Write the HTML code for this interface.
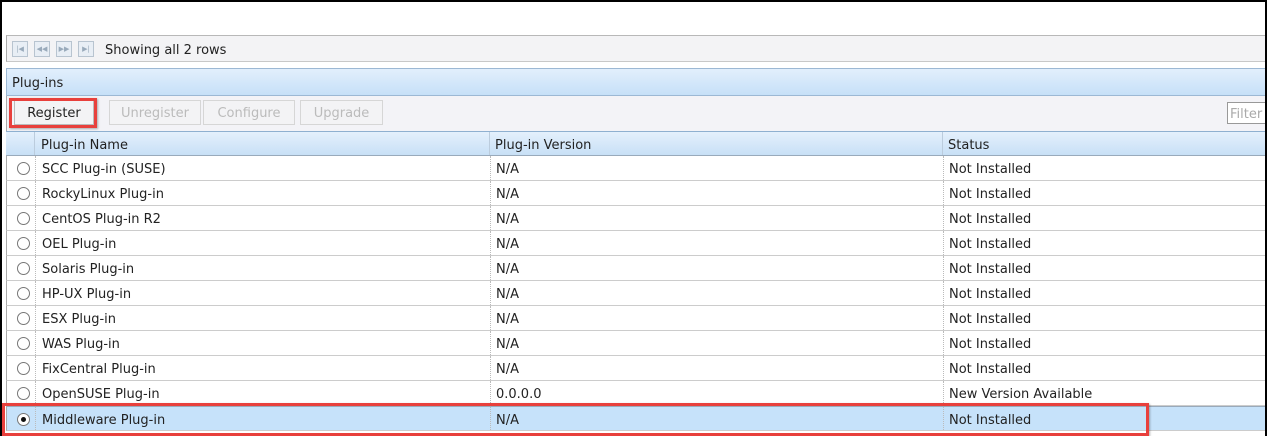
<!DOCTYPE html>
<html><head><meta charset="utf-8"><style>
*{margin:0;padding:0;box-sizing:border-box}
body{width:1267px;height:436px;overflow:hidden;background:#fff;font-family:"DejaVu Sans","Liberation Sans",sans-serif;font-size:13px;color:#222;position:relative}
.abs{position:absolute}
.frame{left:0;top:0;width:1267px;height:436px;border-top:2px solid #000;border-left:2px solid #000;border-right:2px solid #000}
.pager{left:6px;top:35px;width:1259px;height:27px;background:#f3f3f5;border-top:1px solid #b8b8b8;border-bottom:1px solid #c8c8c8;border-left:1px solid #aaa}
.pb{position:absolute;top:5px;width:16px;height:16px;border:1px solid #b8c4d0;background:#e8eef5;font-size:7px;color:#9ab;text-align:center;line-height:14px}
.ph{left:6px;top:68px;width:1259px;height:28px;background:linear-gradient(#e2effc,#c6e0f8);border:1px solid #9cb8d4;border-right:none;padding:7px 0 0 5px;font-size:13px}
.tb{left:6px;top:96px;width:1259px;height:35px;background:#f3f3f7;border-left:1px solid #aaa}
.btn{position:absolute;top:4px;height:25px;border:1px solid #d6d6d6;background:#f3f3f5;color:#bbb;text-align:center;line-height:25px;font-size:13px}
.hdr{left:6px;top:131px;width:1259px;height:25px;background:linear-gradient(#e4f0fc,#c8e0f6);border-top:1px solid #8fb0d0;border-bottom:1px solid #9ab;font-size:13px}
.row{position:absolute;left:6px;width:1259px;height:25px;border-bottom:1px solid #ccc;border-left:1px solid #aaa;font-size:13px}
.c{position:absolute;top:2px;height:100%;line-height:24px}
.c1{left:35px}.c2{left:489px}.c3{left:942px}
.sep{position:absolute;top:0;height:100%;border-left:1px dotted #bbb}
.rad{position:absolute;left:10px;top:6px;width:13px;height:13px;border-radius:50%;border:1px solid #777;background:#fff}
.red{position:absolute;border:3px solid #e8403c;box-shadow:1px 1px 2px rgba(0,0,0,.3)}
</style></head><body>
<div class="abs pager">
<div class="pb" style="left:5px">|◀</div><div class="pb" style="left:27px">◀◀</div><div class="pb" style="left:49px">▶▶</div><div class="pb" style="left:71px">▶|</div>
<div style="position:absolute;left:98px;top:7px;font-size:13px">Showing all 2 rows</div>
</div>
<div class="abs ph">Plug-ins</div>
<div class="abs tb">
<div class="btn" style="left:7px;width:80px;color:#222;border-color:#bbb">Register</div>
<div class="btn" style="left:102px;width:92px">Unregister</div>
<div class="btn" style="left:196px;width:92px">Configure</div>
<div class="btn" style="left:293px;width:83px">Upgrade</div>
<div style="position:absolute;left:1220px;top:6px;width:45px;height:22px;border:1px solid #999;background:#fff;color:#aaa;padding:4px 0 0 2px;font-size:13px">Filter</div>
</div>
<div class="abs hdr">
<div class="sep" style="left:28px;border-left:1px solid #bcd"></div><div class="sep" style="left:483px;border-left:1px solid #bcd"></div><div class="sep" style="left:936px;border-left:1px solid #bcd"></div>
<div class="c c1">Plug-in Name</div><div class="c c2">Plug-in Version</div><div class="c c3">Status</div>
</div>
<div class="row" style="top:156px"><div class="sep" style="left:28px"></div><div class="sep" style="left:483px"></div><div class="sep" style="left:936px"></div><div class="rad"></div><div class="c c1">SCC Plug-in (SUSE)</div><div class="c c2">N/A</div><div class="c c3">Not Installed</div></div>
<div class="row" style="top:181px"><div class="sep" style="left:28px"></div><div class="sep" style="left:483px"></div><div class="sep" style="left:936px"></div><div class="rad"></div><div class="c c1">RockyLinux Plug-in</div><div class="c c2">N/A</div><div class="c c3">Not Installed</div></div>
<div class="row" style="top:206px"><div class="sep" style="left:28px"></div><div class="sep" style="left:483px"></div><div class="sep" style="left:936px"></div><div class="rad"></div><div class="c c1">CentOS Plug-in R2</div><div class="c c2">N/A</div><div class="c c3">Not Installed</div></div>
<div class="row" style="top:231px"><div class="sep" style="left:28px"></div><div class="sep" style="left:483px"></div><div class="sep" style="left:936px"></div><div class="rad"></div><div class="c c1">OEL Plug-in</div><div class="c c2">N/A</div><div class="c c3">Not Installed</div></div>
<div class="row" style="top:256px"><div class="sep" style="left:28px"></div><div class="sep" style="left:483px"></div><div class="sep" style="left:936px"></div><div class="rad"></div><div class="c c1">Solaris Plug-in</div><div class="c c2">N/A</div><div class="c c3">Not Installed</div></div>
<div class="row" style="top:281px"><div class="sep" style="left:28px"></div><div class="sep" style="left:483px"></div><div class="sep" style="left:936px"></div><div class="rad"></div><div class="c c1">HP-UX Plug-in</div><div class="c c2">N/A</div><div class="c c3">Not Installed</div></div>
<div class="row" style="top:306px"><div class="sep" style="left:28px"></div><div class="sep" style="left:483px"></div><div class="sep" style="left:936px"></div><div class="rad"></div><div class="c c1">ESX Plug-in</div><div class="c c2">N/A</div><div class="c c3">Not Installed</div></div>
<div class="row" style="top:331px"><div class="sep" style="left:28px"></div><div class="sep" style="left:483px"></div><div class="sep" style="left:936px"></div><div class="rad"></div><div class="c c1">WAS Plug-in</div><div class="c c2">N/A</div><div class="c c3">Not Installed</div></div>
<div class="row" style="top:356px"><div class="sep" style="left:28px"></div><div class="sep" style="left:483px"></div><div class="sep" style="left:936px"></div><div class="rad"></div><div class="c c1">FixCentral Plug-in</div><div class="c c2">N/A</div><div class="c c3">Not Installed</div></div>
<div class="row" style="top:381px"><div class="sep" style="left:28px"></div><div class="sep" style="left:483px"></div><div class="sep" style="left:936px"></div><div class="rad"></div><div class="c c1">OpenSUSE Plug-in</div><div class="c c2">0.0.0.0</div><div class="c c3">New Version Available</div></div>
<div class="row" style="top:406px;background:#c6e2fa;border-top:1px solid #9ab"><div class="sep" style="left:28px"></div><div class="sep" style="left:483px"></div><div class="sep" style="left:936px"></div><div class="rad"><div style="position:absolute;left:3px;top:3px;width:5px;height:5px;border-radius:50%;background:#111"></div></div><div class="c c1">Middleware Plug-in</div><div class="c c2">N/A</div><div class="c c3">Not Installed</div></div>
<div class="red" style="left:9px;top:98px;width:88px;height:30px"></div>
<div class="red" style="left:2px;top:403px;width:1147px;height:33px"></div>
<div class="abs frame"></div>
</body></html>
